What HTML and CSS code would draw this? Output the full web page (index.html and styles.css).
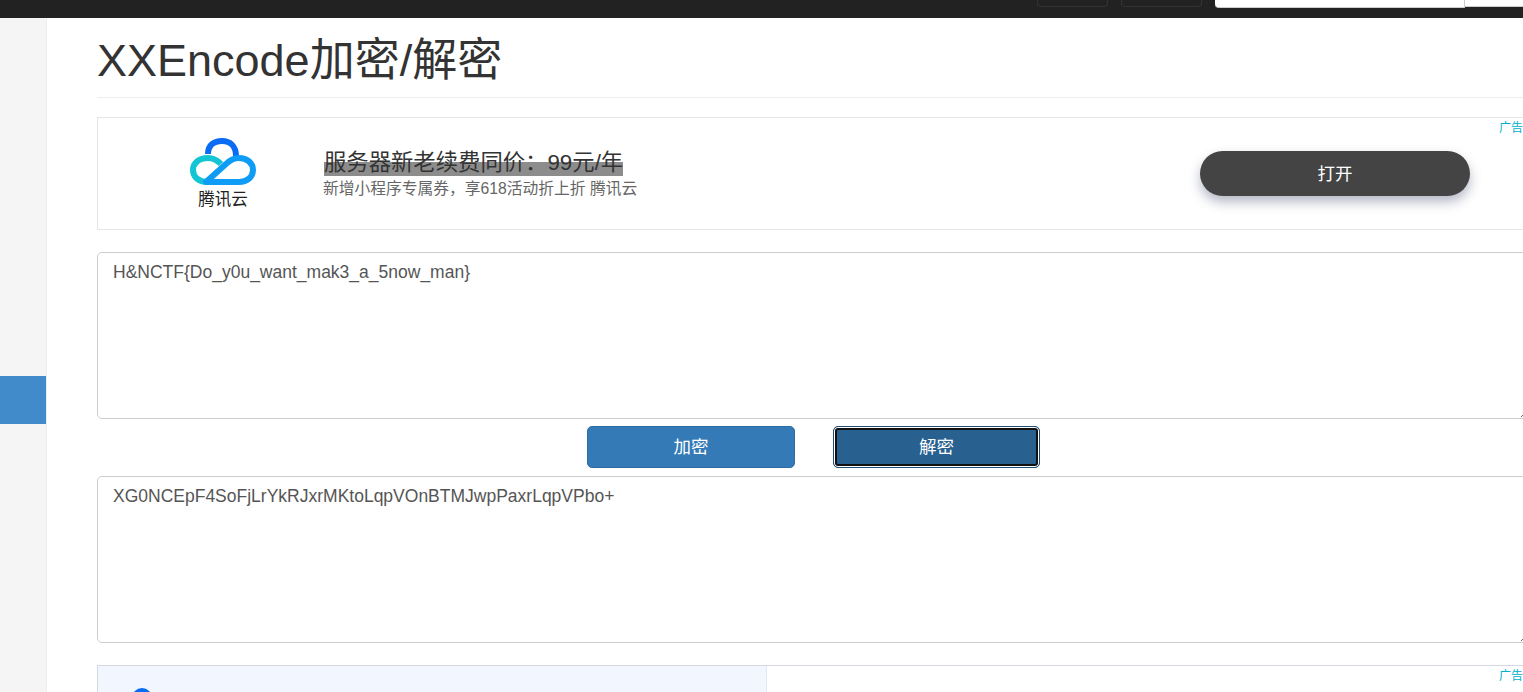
FILE: index.html
```html
<!DOCTYPE html>
<html lang="zh-CN">
<head>
  <title>XXEncode加密/解密</title>
  <meta charset="UTF-8">
  <meta name="viewport" content="width=device-width, initial-scale=1.0">
  <link rel="stylesheet" href="styles.css">
</head>
<body>
  <div class="topbar">
    <span class="nav-btn nav-btn-a"></span>
    <span class="nav-btn nav-btn-b"></span>
    <span class="nav-search"></span>
    <span class="nav-search-btn"></span>
  </div>

  <div class="layout">
    <div class="sidebar">
      <div class="side-active"></div>
    </div>

    <div class="main">
      <h1 class="page-title">XXEncode加密/解密</h1>

      <div class="ad ad-top">
        <a class="ad-tag">广告</a>
        <div class="ad-logo">
          <svg width="72" height="52" viewBox="0 0 72 52" fill="none">
            <path d="M21 19 C21 10 27 6 35 6 C43 6 49 11 49 21" stroke="#0a6cf5" stroke-width="6"/>
            <path d="M34 29 C30 25 26 23 21 23 C12 23 6 28 6 35 C6 42 12 47 20 47" stroke="#12c4d4" stroke-width="6"/>
            <path d="M19 47 H52 C60 47 66 42 66 35 C66 28 60 23 52 23 C46 23 43 25 39 29 L19 47 Z" stroke="#0f9cf7" stroke-width="6" stroke-linejoin="round"/>
          </svg>
          <span class="ad-logo-name">腾讯云</span>
        </div>
        <div class="ad-text">
          <div class="ad-title">服务器新老续费同价：99元/年</div>
          <div class="ad-desc">新增小程序专属券，享618活动折上折 腾讯云</div>
        </div>
        <button class="ad-open">打开</button>
      </div>

      <textarea class="code-box">H&amp;NCTF{Do_y0u_want_mak3_a_5now_man}</textarea>

      <div class="actions">
        <button class="btn">加密</button>
        <button class="btn btn-focus">解密</button>
      </div>

      <textarea class="code-box">XG0NCEpF4SoFjLrYkRJxrMKtoLqpVOnBTMJwpPaxrLqpVPbo+</textarea>

      <div class="ad ad-bottom">
        <a class="ad-tag">广告</a>
        <div class="ad-bottom-left">
          <span class="blue-dot"></span>
        </div>
      </div>
    </div>
  </div>
</body>
</html>
```

FILE: styles.css
```css
html, body {
  height: 100%;
}

body {
  margin: 0;
  overflow: hidden;
  background-color: #fff;
  color: #333;
  font-family: "Liberation Sans", "Noto Sans CJK SC", sans-serif;
}

.topbar {
  height: 18px;
  background-color: #222;
  display: flex;
  align-items: flex-start;
  padding-left: 1037px;
  overflow: hidden;
}

.topbar span {
  flex-shrink: 0;
}

.nav-btn {
  height: 6px;
  border: 1px solid #333;
  border-top: none;
  border-radius: 0 0 4px 4px;
  box-sizing: content-box;
}

.nav-btn-a {
  width: 69px;
  margin-right: 13px;
}

.nav-btn-b {
  width: 79px;
  margin-right: 13px;
}

.nav-search {
  width: 249px;
  height: 7px;
  background-color: #fff;
  border-right: 1px solid #ccc;
  border-bottom: 1px solid #ccc;
  border-radius: 0 0 0 4px;
}

.nav-search-btn {
  width: 60px;
  height: 6px;
  background-color: #fff;
  border-bottom: 1px solid #ccc;
}

.layout {
  display: flex;
  height: calc(100% - 18px);
  overflow: hidden;
}

.sidebar {
  width: 46px;
  flex-shrink: 0;
  padding-top: 358px;
  background-color: #f5f5f5;
  border-right: 1px solid #eee;
}

.side-active {
  height: 48px;
  background-color: #428bca;
}

.main {
  width: 1433px;
  flex-shrink: 0;
  margin-left: 50px;
}

.page-title {
  margin: 0 0 19px;
  height: 80px;
  box-sizing: border-box;
  padding-top: 17px;
  border-bottom: 1px solid #eee;
  font-size: 45px;
  line-height: 52px;
  font-weight: 400;
  color: #333;
}

.ad {
  position: relative;
  box-sizing: border-box;
  border: 1px solid #e6e6e6;
}

.ad-tag {
  position: absolute;
  top: 3px;
  left: 1401px;
  font-size: 12px;
  line-height: 15px;
  color: #00b0d0;
}

.ad-top {
  height: 113px;
  display: flex;
  align-items: center;
  padding-right: 59px;
  margin-bottom: 22px;
}

.ad-logo {
  width: 225px;
  flex-shrink: 0;
  align-self: flex-start;
  box-sizing: border-box;
  padding: 17px 0 0 25px;
  display: flex;
  flex-direction: column;
  align-items: center;
}

.ad-logo svg {
  display: block;
}

.ad-logo-name {
  font-size: 16.5px;
  line-height: 20px;
  color: #222;
  margin-top: 2px;
}

.ad-text {
  flex: 1;
  padding-top: 2px;
}

.ad-title {
  display: inline-block;
  font-size: 22.35px;
  line-height: 26px;
  color: #333;
  background: linear-gradient(transparent 12px, #8c8c8c 12px);
  margin-left: 1px;
}

.ad-desc {
  font-size: 15.75px;
  line-height: 20px;
  color: #666;
  margin-top: 3px;
}

.ad-open {
  width: 270px;
  height: 45px;
  border: none;
  border-radius: 23px;
  background-color: #444;
  color: #fff;
  font-family: inherit;
  font-size: 17.5px;
  padding-bottom: 3px;
  box-shadow: 0 6px 12px rgba(90, 100, 130, 0.45);
}

.code-box {
  display: block;
  width: 100%;
  height: 167px;
  box-sizing: border-box;
  padding: 7px 15px;
  border: 1px solid #ccc;
  border-radius: 5px;
  font-family: inherit;
  font-size: 17.5px;
  line-height: 25px;
  color: #555;
  outline: none;
}

.actions {
  display: flex;
  justify-content: center;
  gap: 38px;
  margin: 7px 0 8px;
}

.btn {
  width: 208px;
  height: 42px;
  box-sizing: border-box;
  border: 1px solid #2e6da4;
  border-radius: 5px;
  background-color: #337ab7;
  color: #fff;
  font-family: inherit;
  font-size: 17.5px;
  padding-bottom: 4px;
}

.btn-focus {
  width: 207px;
  background-color: #286090;
  border-color: #204d74;
  box-shadow: inset 0 0 0 1px #fff, inset 0 0 0 3px #111;
}

.ad-bottom {
  margin-top: 22px;
  height: 27px;
  overflow: hidden;
  border-color: #d5d8e0;
  border-bottom: none;
}

.ad-bottom-left {
  width: 669px;
  height: 100%;
  background-color: #f2f6fe;
  border-right: 1px solid #e4e8f0;
  padding: 22px 0 0 34px;
  box-sizing: border-box;
}

.blue-dot {
  display: block;
  width: 20px;
  height: 20px;
  border-radius: 50%;
  background-color: #0a6cf5;
}
```
